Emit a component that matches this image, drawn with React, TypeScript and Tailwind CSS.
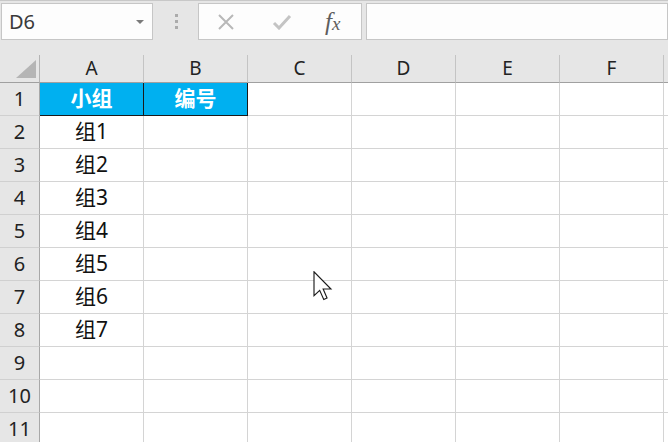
import React from "react";

const cols = ["A", "B", "C", "D", "E", "F"];
const groups = ["组1", "组2", "组3", "组4", "组5", "组6", "组7"];
const font = { fontFamily: '"Noto Sans", "Noto Sans CJK SC", sans-serif' };

function Corner() {
  return (
    <div className="h-[28px] border-r border-b border-r-[#b4b4b4] border-b-[#a0a0a0] bg-[#e6e6e6] relative">
      <svg className="absolute left-[16px] top-[5px]" width="21" height="18" viewBox="0 0 21 18">
        <polygon points="20,0 20,18 0,18" fill="#b5b5b5" />
      </svg>
    </div>
  );
}

function Cursor() {
  return (
    <svg className="absolute left-[313px] top-[271px]" width="20" height="30" viewBox="0 0 13 20">
      <path
        d="M0.5 0.5 L0.5 16.5 L4.3 12.9 L7 19 L9.2 18 L6.6 12 L11.8 12 Z"
        fill="#fff"
        stroke="#1a1a1a"
        strokeWidth="0.75"
        strokeLinejoin="miter"
      />
    </svg>
  );
}

export default function App() {
  const rows = Array.from({ length: 11 }, (_, i) => i + 1);

  return (
    <div className="w-[668px] h-[442px] overflow-hidden bg-[#e6e6e6] relative" style={font}>
      {/* formula bar */}
      <div className="h-[55px] border-t border-[#c8c8c8] flex items-start pt-[2px]">
        <div className="ml-[1px] w-[152px] h-[37px] bg-[#fdfdfd] border border-[#c6c6c6] flex items-center justify-between pl-[7px] pr-[8px]">
          <span className="text-[20px] text-[#3a3a3a]">D6</span>
          <svg width="8" height="4" viewBox="0 0 8 4">
            <polygon points="0,0 8,0 4,4" fill="#7a7a7a" />
          </svg>
        </div>
        <div className="w-[45px] h-[37px] flex flex-col items-center justify-center gap-[3px] pl-[1px]">
          <span className="w-[3px] h-[3px] bg-[#ababab]" />
          <span className="w-[3px] h-[3px] bg-[#ababab]" />
          <span className="w-[3px] h-[3px] bg-[#ababab]" />
        </div>
        <div className="w-[164px] h-[37px] bg-[#fdfdfd] border border-[#c6c6c6] flex items-center">
          <svg className="ml-[18px]" width="18" height="16" viewBox="0 0 18 16">
            <path d="M2 1 L16 15 M16 1 L2 15" stroke="#b8b8b8" strokeWidth="2" />
          </svg>
          <svg className="ml-[37px]" width="20" height="16" viewBox="0 0 20 16">
            <path d="M2 9 L7 14 L18 2" stroke="#c4c4c4" strokeWidth="3" fill="none" />
          </svg>
          <span
            className="ml-[33px] text-[25px] italic text-[#5e5e5e] leading-none"
            style={{ fontFamily: '"Liberation Serif", "DejaVu Serif", serif' }}
          >
            f<span className="text-[19px]">x</span>
          </span>
        </div>
        <div className="ml-[4px] flex-1 h-[37px] bg-[#fdfdfd] border border-[#c6c6c6]" />
      </div>

      {/* sheet */}
      <div className="grid grid-cols-[40px_repeat(6,104px)_1fr]">
        <Corner />
        {cols.map((c) => (
          <div
            key={c}
            className="h-[28px] border-r border-b border-r-[#c4c4c4] border-b-[#a0a0a0] flex items-center justify-center text-[19px] text-[#222]"
          >
            {c}
          </div>
        ))}
        <div className="h-[28px] border-b border-b-[#a0a0a0]" />

        {rows.map((r) => (
          <React.Fragment key={r}>
            <div className="h-[33px] border-r border-b border-r-[#a8a8a8] border-b-[#d0d0d0] flex items-center justify-center text-[20px] text-[#222]">
              {r}
            </div>
            {cols.map((c, ci) => {
              const header = r === 1 && ci < 2;
              if (header) {
                return (
                  <div
                    key={c}
                    className="h-[33px] border-r border-b border-[#1a1a1a] bg-[#00b0f0] flex items-center justify-center text-[21px] font-bold text-white"
                  >
                    {ci === 0 ? "小组" : "编号"}
                  </div>
                );
              }
              const text = ci === 0 && r >= 2 && r <= 8 ? groups[r - 2] : "";
              return (
                <div
                  key={c}
                  className="h-[33px] bg-white border-r border-b border-[#d4d4d4] flex items-center justify-center text-[21px] text-[#111]"
                >
                  {text}
                </div>
              );
            })}
            <div className="h-[33px] bg-white border-b border-[#d4d4d4]" />
          </React.Fragment>
        ))}
      </div>

      <Cursor />
    </div>
  );
}
